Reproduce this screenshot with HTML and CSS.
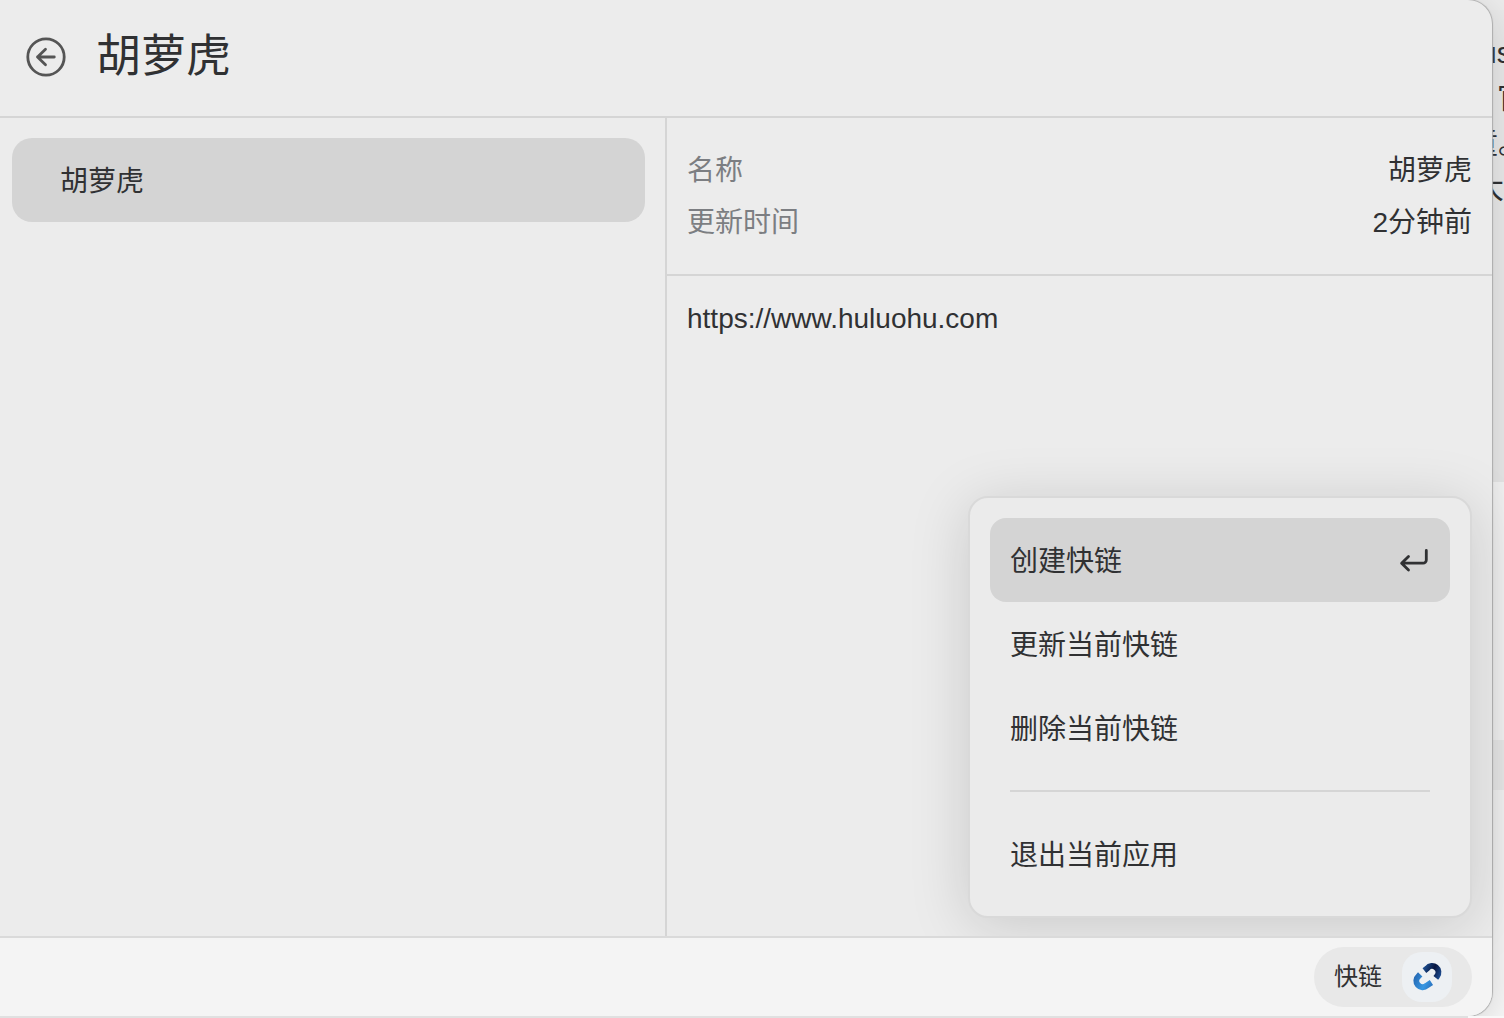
FILE: index.html
```html
<!DOCTYPE html>
<html lang="zh-CN">
<head>
  <meta charset="utf-8">
  <title>快链</title>
  <link rel="stylesheet" href="styles.css">
</head>
<body>
  <div class="backdrop" aria-hidden="true">
    <div class="backdrop-text">
      <p class="line line-latin">us</p>
      <p class="line line-short">官</p>
      <p class="line">童。</p>
      <p class="line line-wide">大</p>
    </div>
    <div class="backdrop-blank"></div>
    <div class="backdrop-band"></div>
  </div>

  <main class="window">
    <header class="header">
      <button class="back" type="button" aria-label="返回">
        <svg viewBox="0 0 40 40" width="40" height="40" fill="none" stroke="currentColor" stroke-linecap="round" stroke-linejoin="round">
          <circle cx="20" cy="20" r="18.2" stroke-width="2.8"/>
          <path d="M28.3 20H11.5M19.5 12.2 11.5 20l8 7.8" stroke-width="2.8"/>
        </svg>
      </button>
      <h1 class="title">胡萝虎</h1>
    </header>

    <div class="content">
      <nav class="list">
        <button class="list-item" type="button">胡萝虎</button>
      </nav>
      <section class="detail">
        <dl class="meta">
          <div class="meta-row"><dt>名称</dt><dd>胡萝虎</dd></div>
          <div class="meta-row"><dt>更新时间</dt><dd>2分钟前</dd></div>
        </dl>
        <a class="url" href="https://www.huluohu.com">https://www.huluohu.com</a>
      </section>

      <div class="menu" role="menu">
        <button class="menu-item selected" type="button" role="menuitem">
          创建快链
          <svg viewBox="0 0 32 32" width="32" height="32" fill="none" stroke="currentColor" stroke-width="2.8" stroke-linecap="round" stroke-linejoin="round">
            <path d="M28.3 7.5v9.5a3.2 3.2 0 0 1-3.2 3.2H4M10.5 13.4 3.6 20.2l6.9 6.8"/>
          </svg>
        </button>
        <button class="menu-item" type="button" role="menuitem">更新当前快链</button>
        <button class="menu-item" type="button" role="menuitem">删除当前快链</button>
        <hr class="menu-rule">
        <button class="menu-item" type="button" role="menuitem">退出当前应用</button>
      </div>
    </div>

    <footer class="footer">
      <button class="app" type="button">
        快链
        <span class="app-icon">
          <svg viewBox="0 0 50 50" width="50" height="50" fill="none" stroke-width="6">
            <defs>
              <linearGradient id="navy" gradientUnits="userSpaceOnUse" x1="21" y1="18" x2="38" y2="26">
                <stop offset="0" stop-color="#1c4c8c"/>
                <stop offset=".5" stop-color="#07153f"/>
                <stop offset="1" stop-color="#1e4f94"/>
              </linearGradient>
              <linearGradient id="sky" gradientUnits="userSpaceOnUse" x1="12" y1="25" x2="31" y2="34">
                <stop offset="0" stop-color="#2569b4"/>
                <stop offset=".6" stop-color="#3797e2"/>
                <stop offset="1" stop-color="#2a70bd"/>
              </linearGradient>
            </defs>
            <path d="M22.4 18.6 25.2 16.4A5.9 5.9 0 0 1 35 24.3L33.8 25.8" stroke="url(#navy)"/>
            <path d="M18.2 22.4 16.5 24.2A6 6 0 0 0 24.8 33.6L29.4 30.6" stroke="url(#sky)"/>
          </svg>
        </span>
      </button>
    </footer>
  </main>
</body>
</html>
```
FILE: styles.css
```css
* {
  box-sizing: border-box;
}

body {
  margin: 0;
  background: #e0e0e0;
  color: #303133;
  font-family: "Liberation Sans", "Noto Sans CJK SC", sans-serif;
  font-size: 28px;
}

h1, p, dl, dd {
  margin: 0;
}

button {
  border: 0;
  padding: 0;
  background: none;
  color: inherit;
  font: inherit;
  text-align: left;
}

/* The document that shows past the right edge of the window */
.backdrop {
  position: absolute;
  top: 0;
  right: 0;
  bottom: 0;
  width: 36px;
  overflow: hidden;
  background: #f8f8f8;
}

.backdrop-text {
  height: 482px;
  padding-top: 20px;
  border-top: 10px solid #ececec;
  background: #eaeaea;
}

.backdrop-blank {
  height: 258px;
}

.backdrop-band {
  height: 50px;
  background: #eeeeee;
}

.line {
  font-size: 30px;
  line-height: 45px;
  white-space: nowrap;
}

.line-latin {
  padding-left: 12px;
}

.line-short {
  padding-left: 29px;
}

.line-wide {
  padding-left: 6px;
}

.window {
  position: relative;
  display: flex;
  flex-direction: column;
  height: calc(100vh - 2px);
  margin-right: 12px;
  border-radius: 0 24px 24px 0;
  background: #ececec;
  box-shadow: 0 0 1px 1px #acacac, 0 8px 40px #00000029;
}

.header {
  display: flex;
  align-items: center;
  gap: 30px;
  height: 118px;
  padding: 0 26px 2px;
  border-bottom: 2px solid #d5d5d5;
}

.back {
  display: flex;
  color: #555;
}

.title {
  font-size: 45px;
  font-weight: 400;
  line-height: 64px;
}

.content {
  position: relative;
  display: grid;
  grid-template-columns: 667fr 825fr;
  flex: 1;
}

.list {
  padding: 20px 20px 20px 12px;
  border-right: 2px solid #d5d5d5;
}

.list-item {
  width: 100%;
  height: 84px;
  padding: 0 48px 2px;
  border-radius: 20px;
  background: #d4d4d4;
}

.meta {
  padding: 27px 20px 25px;
  border-bottom: 2px solid #d5d5d5;
}

.meta-row {
  display: flex;
  justify-content: space-between;
  line-height: 52px;
}

.meta dt {
  color: #7c7e82;
}

.url {
  display: block;
  padding: 21px 20px;
  color: inherit;
  line-height: 44px;
  text-decoration: none;
}

.menu {
  position: absolute;
  right: 20px;
  bottom: 18px;
  z-index: 1;
  width: 504px;
  padding: 20px;
  border: 2px solid #d9d9d9;
  border-radius: 20px;
  background: #ebebeb;
  box-shadow: 0 8px 60px #00000026;
}

.menu-item {
  display: flex;
  align-items: center;
  justify-content: space-between;
  width: 100%;
  height: 84px;
  padding: 0 20px 2px;
  border-radius: 16px;
}

.selected {
  background: #d4d4d4;
}

.menu-rule {
  height: 2px;
  margin: 20px;
  border: 0;
  background: #d5d5d5;
}

.footer {
  position: relative;
  z-index: 2;
  display: flex;
  align-items: center;
  justify-content: flex-end;
  height: 80px;
  padding: 0 20px;
  border-top: 2px solid #dadada;
  border-bottom-right-radius: 24px;
  background: #f4f4f4;
}

.app {
  display: flex;
  align-items: center;
  gap: 20px;
  height: 60px;
  padding: 0 20px;
  border-radius: 30px;
  background: #e8e8e8;
  font-size: 24px;
  line-height: 32px;
}

.app-icon {
  display: flex;
  border-radius: 20px;
  background: #edf0f3;
}
```
